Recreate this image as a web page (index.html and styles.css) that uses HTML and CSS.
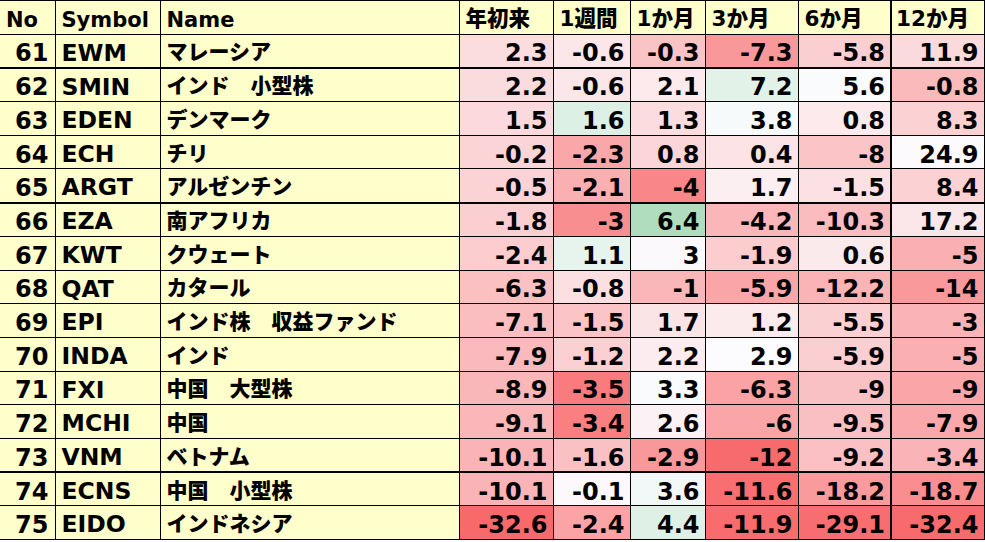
FILE: index.html
```html
<!DOCTYPE html>
<html lang="ja">
<head>
<meta charset="utf-8">
<title>ETF</title>
<link rel="stylesheet" href="styles.css">
</head>
<body>
<table class="grid">
  <colgroup>
    <col class="w-no"><col class="w-sym"><col class="w-name">
    <col class="w-ytd"><col class="w-1w"><col class="w-1m"><col class="w-3m"><col class="w-6m"><col class="w-12m">
  </colgroup>
  <thead>
    <tr>
      <th class="lat">No</th><th class="lat">Symbol</th><th class="lat">Name</th>
      <th class="jp">年初来</th><th class="jp">1週間</th><th class="jp">1か月</th><th class="jp">3か月</th><th class="jp">6か月</th><th class="jp last">12か月</th>
    </tr>
  </thead>
  <tbody>
    <tr><td class="no">61</td><td class="sym">EWM</td><td class="name">マレーシア</td><td class="v">2.3</td><td class="v">-0.6</td><td class="v">-0.3</td><td class="v">-7.3</td><td class="v">-5.8</td><td class="v last">11.9</td></tr>
    <tr class="sep"><td class="no">62</td><td class="sym">SMIN</td><td class="name">インド　小型株</td><td class="v">2.2</td><td class="v">-0.6</td><td class="v">2.1</td><td class="v">7.2</td><td class="v">5.6</td><td class="v last">-0.8</td></tr>
    <tr><td class="no">63</td><td class="sym">EDEN</td><td class="name">デンマーク</td><td class="v">1.5</td><td class="v">1.6</td><td class="v">1.3</td><td class="v">3.8</td><td class="v">0.8</td><td class="v last">8.3</td></tr>
    <tr><td class="no">64</td><td class="sym">ECH</td><td class="name">チリ</td><td class="v">-0.2</td><td class="v">-2.3</td><td class="v">0.8</td><td class="v">0.4</td><td class="v">-8</td><td class="v last">24.9</td></tr>
    <tr><td class="no">65</td><td class="sym">ARGT</td><td class="name">アルゼンチン</td><td class="v">-0.5</td><td class="v">-2.1</td><td class="v">-4</td><td class="v">1.7</td><td class="v">-1.5</td><td class="v last">8.4</td></tr>
    <tr class="sep"><td class="no">66</td><td class="sym">EZA</td><td class="name">南アフリカ</td><td class="v">-1.8</td><td class="v">-3</td><td class="v">6.4</td><td class="v">-4.2</td><td class="v">-10.3</td><td class="v last">17.2</td></tr>
    <tr><td class="no">67</td><td class="sym">KWT</td><td class="name">クウェート</td><td class="v">-2.4</td><td class="v">1.1</td><td class="v">3</td><td class="v">-1.9</td><td class="v">0.6</td><td class="v last">-5</td></tr>
    <tr><td class="no">68</td><td class="sym">QAT</td><td class="name">カタール</td><td class="v">-6.3</td><td class="v">-0.8</td><td class="v">-1</td><td class="v">-5.9</td><td class="v">-12.2</td><td class="v last">-14</td></tr>
    <tr><td class="no">69</td><td class="sym">EPI</td><td class="name">インド株　収益ファンド</td><td class="v">-7.1</td><td class="v">-1.5</td><td class="v">1.7</td><td class="v">1.2</td><td class="v">-5.5</td><td class="v last">-3</td></tr>
    <tr><td class="no">70</td><td class="sym">INDA</td><td class="name">インド</td><td class="v">-7.9</td><td class="v">-1.2</td><td class="v">2.2</td><td class="v">2.9</td><td class="v">-5.9</td><td class="v last">-5</td></tr>
    <tr><td class="no">71</td><td class="sym">FXI</td><td class="name">中国　大型株</td><td class="v">-8.9</td><td class="v">-3.5</td><td class="v">3.3</td><td class="v">-6.3</td><td class="v">-9</td><td class="v last">-9</td></tr>
    <tr><td class="no">72</td><td class="sym">MCHI</td><td class="name">中国</td><td class="v">-9.1</td><td class="v">-3.4</td><td class="v">2.6</td><td class="v">-6</td><td class="v">-9.5</td><td class="v last">-7.9</td></tr>
    <tr><td class="no">73</td><td class="sym">VNM</td><td class="name">ベトナム</td><td class="v">-10.1</td><td class="v">-1.6</td><td class="v">-2.9</td><td class="v">-12</td><td class="v">-9.2</td><td class="v last">-3.4</td></tr>
    <tr class="sep"><td class="no">74</td><td class="sym">ECNS</td><td class="name">中国　小型株</td><td class="v">-10.1</td><td class="v">-0.1</td><td class="v">3.6</td><td class="v">-11.6</td><td class="v">-18.2</td><td class="v last">-18.7</td></tr>
    <tr><td class="no">75</td><td class="sym">EIDO</td><td class="name">インドネシア</td><td class="v">-32.6</td><td class="v">-2.4</td><td class="v">4.4</td><td class="v">-11.9</td><td class="v">-29.1</td><td class="v last">-32.4</td></tr>
  </tbody>
</table>
<script src="script.js"></script>
</body>
</html>
```

FILE: styles.css
```css
html, body {
  margin: 0;
  background: #ffffff;
}

.grid {
  border-collapse: collapse;
  table-layout: fixed;
  width: 984px;
  font-family: "DejaVu Sans", "Noto Sans CJK JP", sans-serif;
  font-weight: bold;
  color: #000;
}

.w-no { width: 55px; }
.w-sym { width: 105px; }
.w-name { width: 299px; }
.w-ytd { width: 94px; }
.w-1w { width: 77px; }
.w-1m { width: 75px; }
.w-3m { width: 93px; }
.w-6m { width: 93px; }
.w-12m { width: 93px; }

.grid tr {
  height: 33.7px;
}

.grid th,
.grid td {
  border: 1px solid #000;
  padding: 5px 6px 0 6px;
  line-height: 1;
  white-space: nowrap;
  overflow: hidden;
  vertical-align: middle;
}

.grid th:first-child,
.grid td:first-child {
  border-left: none;
}

.grid .last {
  border-left: 2px solid #000;
}

.grid tr.sep td {
  border-top: 2px solid #000;
}

.grid th {
  background: #ffffcc;
  text-align: left;
  padding-top: 4px;
}

.grid th.lat {
  font-size: 21px;
  padding-top: 6px;
  padding-left: 6px;
}

.grid th.jp {
  font-size: 21.5px;
  font-weight: 900;
  padding-left: 6px;
  padding-top: 2px;
}

.grid th.last {
  padding-left: 4px;
}

.grid td.no {
  background: #ffffcc;
  text-align: right;
  font-size: 24px;
}

.grid td.sym {
  background: #ffffcc;
  font-size: 23.5px;
}

.grid td.name {
  background: #ffffcc;
  font-family: "Noto Sans CJK JP", sans-serif;
  font-size: 21px;
  font-weight: 900;
  padding-top: 0;
}

.grid td.v {
  text-align: right;
  font-size: 24px;
  padding-right: 5px;
  background: #fcfcff;
}
```

FILE: script.js
```js
(function () {
  var params = [
    { mid: 12, min: -32.6, max: 40 },
    { mid: 0, min: -4, max: 8 },
    { mid: 3.2, min: -5.8, max: 9.6 },
    { mid: 3, min: -12.2, max: 28 },
    { mid: 5, min: -30, max: 40 },
    { mid: 25.5, min: -33, max: 60 }
  ];
  var white = [252, 252, 255];
  var red = [248, 105, 107];
  var green = [99, 190, 123];
  function mix(a, b, t) {
    return 'rgb(' + a.map(function (c, i) {
      return Math.round(c + (b[i] - c) * t);
    }).join(',') + ')';
  }
  var rows = document.querySelectorAll('.grid tbody tr');
  rows.forEach(function (tr) {
    var cells = tr.querySelectorAll('td.v');
    cells.forEach(function (td, i) {
      var p = params[i];
      var v = parseFloat(td.textContent);
      var color;
      if (v < p.mid) {
        color = mix(white, red, Math.min(1, (p.mid - v) / (p.mid - p.min)));
      } else {
        color = mix(white, green, Math.min(1, (v - p.mid) / (p.max - p.mid)));
      }
      td.style.backgroundColor = color;
    });
  });
})();
```
